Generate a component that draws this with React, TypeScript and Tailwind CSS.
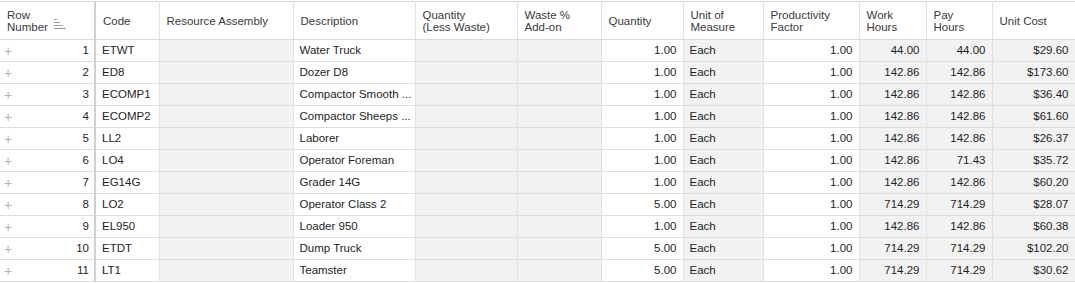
const columns = [
  { key: "row", label: ["Row", "Number"], width: 95, align: "right", gray: false },
  { key: "code", label: ["Code"], width: 64, align: "left", gray: false },
  { key: "assembly", label: ["Resource Assembly"], width: 134, align: "left", gray: true },
  { key: "desc", label: ["Description"], width: 122, align: "left", gray: false },
  { key: "qlw", label: ["Quantity", "(Less Waste)"], width: 102, align: "right", gray: true },
  { key: "waste", label: ["Waste %", "Add-on"], width: 84, align: "right", gray: true },
  { key: "qty", label: ["Quantity"], width: 82, align: "right", gray: false },
  { key: "unit", label: ["Unit of", "Measure"], width: 80, align: "left", gray: true },
  { key: "prod", label: ["Productivity", "Factor"], width: 96, align: "right", gray: false },
  { key: "work", label: ["Work", "Hours"], width: 67, align: "right", gray: true },
  { key: "pay", label: ["Pay", "Hours"], width: 66, align: "right", gray: true },
  { key: "cost", label: ["Unit Cost"], width: 83, align: "right", gray: true },
];

const rows = [
  ["1", "ETWT", "", "Water Truck", "", "", "1.00", "Each", "1.00", "44.00", "44.00", "$29.60"],
  ["2", "ED8", "", "Dozer D8", "", "", "1.00", "Each", "1.00", "142.86", "142.86", "$173.60"],
  ["3", "ECOMP1", "", "Compactor Smooth ...", "", "", "1.00", "Each", "1.00", "142.86", "142.86", "$36.40"],
  ["4", "ECOMP2", "", "Compactor Sheeps ...", "", "", "1.00", "Each", "1.00", "142.86", "142.86", "$61.60"],
  ["5", "LL2", "", "Laborer", "", "", "1.00", "Each", "1.00", "142.86", "142.86", "$26.37"],
  ["6", "LO4", "", "Operator Foreman", "", "", "1.00", "Each", "1.00", "142.86", "71.43", "$35.72"],
  ["7", "EG14G", "", "Grader 14G", "", "", "1.00", "Each", "1.00", "142.86", "142.86", "$60.20"],
  ["8", "LO2", "", "Operator Class 2", "", "", "5.00", "Each", "1.00", "714.29", "714.29", "$28.07"],
  ["9", "EL950", "", "Loader 950", "", "", "1.00", "Each", "1.00", "142.86", "142.86", "$60.38"],
  ["10", "ETDT", "", "Dump Truck", "", "", "5.00", "Each", "1.00", "714.29", "714.29", "$102.20"],
  ["11", "LT1", "", "Teamster", "", "", "5.00", "Each", "1.00", "714.29", "714.29", "$30.62"],
];

const SortIcon = () => (
  <svg width="12" height="10" viewBox="0 0 12 10" className="ml-[6px] mt-[7px]">
    <g stroke="#9a9a9a" strokeWidth="1">
      <line x1="0" y1="0.5" x2="3" y2="0.5" />
      <line x1="0" y1="3.5" x2="6" y2="3.5" />
      <line x1="0" y1="6.5" x2="9" y2="6.5" />
      <line x1="0" y1="9.5" x2="12" y2="9.5" />
    </g>
  </svg>
);

export default function App() {
  return (
    <div
      className="w-[1075px] h-[283px] overflow-hidden bg-white pt-px text-[11.5px] text-[#1e1e1e]"
      style={{ fontFamily: '"Liberation Sans", Arial, sans-serif' }}
    >
      <table className="table-fixed border-collapse w-[1075px]">
        <colgroup>
          {columns.map((c) => (
            <col key={c.key} style={{ width: c.width }} />
          ))}
        </colgroup>
        <thead>
          <tr className="h-[38px]">
            {columns.map((c, i) => (
              <th
                key={c.key}
                className={`p-0 font-normal text-left align-middle border-t border-b border-[#d9d9d9] text-[#3a3a3a] leading-[12px] ${
                  i === 0 ? "border-r-2 border-r-[#d0d0d0]" : "border-r border-r-[#e2e2e2]"
                }`}
              >
                <div className="flex items-center pl-[7px] pr-1">
                  <div className="flex flex-col">
                    {c.label.map((l) => (
                      <span key={l} className="whitespace-nowrap">
                        {l}
                      </span>
                    ))}
                  </div>
                  {i === 0 && <SortIcon />}
                </div>
              </th>
            ))}
          </tr>
        </thead>
        <tbody>
          {rows.map((r) => (
            <tr key={r[0]} className="h-[22px]">
              {r.map((v, i) => {
                const c = columns[i];
                return (
                  <td
                    key={c.key}
                    className={`p-0 align-middle border-b border-[#dedede] whitespace-nowrap overflow-hidden ${
                      c.gray ? "bg-[#f2f2f2]" : "bg-white"
                    } ${i === 0 ? "border-r-2 border-r-[#d0d0d0]" : "border-r border-r-[#e2e2e2]"}`}
                  >
                    {i === 0 ? (
                      <div className="flex items-center justify-between pl-[4px] pr-[5px]">
                        <span className="text-[#b5b5b5] text-[14px] leading-none">+</span>
                        <span>{v}</span>
                      </div>
                    ) : (
                      <div className={`px-[6px] ${c.align === "right" ? "text-right" : "text-left"}`}>{v}</div>
                    )}
                  </td>
                );
              })}
            </tr>
          ))}
        </tbody>
      </table>
    </div>
  );
}
